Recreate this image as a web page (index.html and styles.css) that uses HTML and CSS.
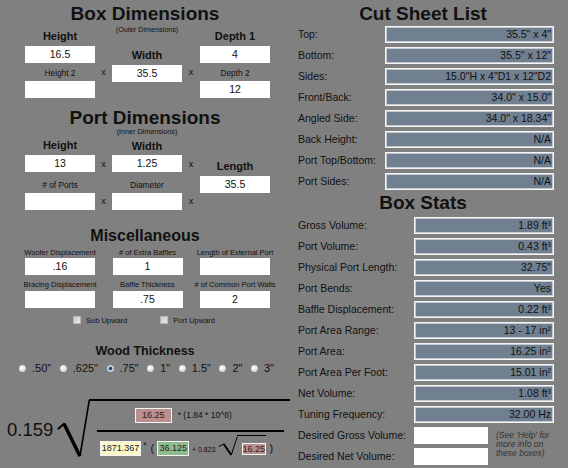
FILE: index.html
```html
<!DOCTYPE html>
<html>
<head>
<meta charset="utf-8">
<link rel="stylesheet" href="styles.css">
</head>
<body>
<div class="app">
  <div class="left">
    <section class="sec-box">
      <h1 class="title">Box Dimensions</h1>
      <div class="dims">
        <div class="col">
          <div class="lb bx-l1">Height</div>
          <div class="field bx-f1">16.5</div>
          <div class="ls bx-l2">Height 2</div>
          <div class="field bx-f2"></div>
        </div>
        <div class="sep bx-sep">x</div>
        <div class="col">
          <div class="sub bx-sub">(Outer Dimensions)</div>
          <div class="lb bx-wl">Width</div>
          <div class="field bx-wf">35.5</div>
        </div>
        <div class="sep bx-sep">x</div>
        <div class="col">
          <div class="lb bx-l1">Depth 1</div>
          <div class="field bx-f1">4</div>
          <div class="ls bx-l2">Depth 2</div>
          <div class="field bx-f2">12</div>
        </div>
      </div>
    </section>

    <section class="sec-port">
      <h1 class="title pt-title">Port Dimensions</h1>
      <div class="dims">
        <div class="col">
          <div class="lb pt-l1">Height</div>
          <div class="field pt-f1">13</div>
          <div class="ls pt-l2"># of Ports</div>
          <div class="field pt-f2"></div>
        </div>
        <div class="col sep pt-sep">
          <div>x</div>
          <div class="pt-sep2">x</div>
        </div>
        <div class="col">
          <div class="sub pt-sub">(Inner Dimensions)</div>
          <div class="lb pt-wl">Width</div>
          <div class="field pt-f1w">1.25</div>
          <div class="ls pt-l2">Diameter</div>
          <div class="field pt-f2"></div>
        </div>
        <div class="col sep pt-sep">
          <div>x</div>
          <div class="pt-sep2">x</div>
        </div>
        <div class="col">
          <div class="lb pt-ll">Length</div>
          <div class="field pt-lf">35.5</div>
        </div>
      </div>
    </section>

    <section class="sec-misc">
      <h2 class="title-m">Miscellaneous</h2>
      <div class="misc-row mr1">
        <div class="cell"><div class="ml">Woofer Displacement</div><div class="field mf">.16</div></div>
        <div class="cell"><div class="ml"># of Extra Baffles</div><div class="field mf">1</div></div>
        <div class="cell"><div class="ml">Length of External Port</div><div class="field mf"></div></div>
      </div>
      <div class="misc-row mr2">
        <div class="cell"><div class="ml">Bracing Displacement</div><div class="field mf"></div></div>
        <div class="cell"><div class="ml">Baffle Thickness</div><div class="field mf">.75</div></div>
        <div class="cell"><div class="ml"># of Common Port Walls</div><div class="field mf">2</div></div>
      </div>
      <div class="checks">
        <div class="chk"><span class="cbox"></span><span>Sub Upward</span></div>
        <div class="chk"><span class="cbox"></span><span>Port Upward</span></div>
      </div>
    </section>

    <section class="sec-wood">
      <h2 class="title-w">Wood Thickness</h2>
      <div class="radios">
        <div class="rad"><span class="rdot"></span><span>.50"</span></div>
        <div class="rad"><span class="rdot"></span><span>.625"</span></div>
        <div class="rad"><span class="rdot on"></span><span>.75"</span></div>
        <div class="rad"><span class="rdot"></span><span>1"</span></div>
        <div class="rad"><span class="rdot"></span><span>1.5"</span></div>
        <div class="rad"><span class="rdot"></span><span>2"</span></div>
        <div class="rad"><span class="rdot"></span><span>3"</span></div>
      </div>
    </section>

    <div class="formula">
      <div class="coef">0.159</div>
      <svg class="radical" width="32" height="59" viewBox="0 0 32 59">
        <line x1="1.3" y1="29.8" x2="7" y2="24.8" stroke="#000" stroke-width="1.8" stroke-linecap="round"/>
        <line x1="7" y1="24.8" x2="23" y2="57.2" stroke="#000" stroke-width="3.4"/>
        <line x1="23" y1="57.2" x2="32.3" y2="1" stroke="#000" stroke-width="1.6"/>
      </svg>
      <div class="radicand">
        <div class="num">
          <span class="chip pink wn">16.25</span>
          <span class="ntext">* (1.84 * 10^8)</span>
        </div>
        <div class="bar"></div>
        <div class="den">
          <span class="chip yellow wy">1871.367</span>
          <span class="op">*</span>
          <span class="paren">(</span>
          <span class="chip green wg">36.125</span>
          <span class="plus">+ 0.823</span>
          <span class="sqs">
            <svg class="rad-s" width="19" height="20" viewBox="0 0 19 20">
              <line x1="0.7" y1="10.7" x2="5.7" y2="8" stroke="#000" stroke-width="1" />
              <line x1="5.7" y1="8" x2="13.3" y2="19" stroke="#000" stroke-width="2"/>
              <line x1="13.3" y1="19" x2="19.2" y2="0.7" stroke="#000" stroke-width="1"/>
            </svg>
            <span class="over"><span class="chip pink wp">16.25</span></span>
          </span>
          <span class="paren pr">)</span>
        </div>
      </div>
    </div>
  </div>

  <div class="right">
    <h1 class="rtitle">Cut Sheet List</h1>
    <div class="list cut">
      <div class="row"><span class="k">Top:</span><span class="val">35.5" x 4"</span></div>
      <div class="row"><span class="k">Bottom:</span><span class="val">35.5" x 12"</span></div>
      <div class="row"><span class="k">Sides:</span><span class="val">15.0"H x 4"D1 x 12"D2</span></div>
      <div class="row"><span class="k">Front/Back:</span><span class="val">34.0" x 15.0"</span></div>
      <div class="row"><span class="k">Angled Side:</span><span class="val">34.0" x 18.34"</span></div>
      <div class="row"><span class="k">Back Height:</span><span class="val">N/A</span></div>
      <div class="row"><span class="k">Port Top/Bottom:</span><span class="val">N/A</span></div>
      <div class="row"><span class="k">Port Sides:</span><span class="val">N/A</span></div>
    </div>
    <h1 class="rtitle stitle">Box Stats</h1>
    <div class="list stats">
      <div class="row"><span class="k">Gross Volume:</span><span class="val">1.89 ft³</span></div>
      <div class="row"><span class="k">Port Volume:</span><span class="val">0.43 ft³</span></div>
      <div class="row"><span class="k">Physical Port Length:</span><span class="val">32.75"</span></div>
      <div class="row"><span class="k">Port Bends:</span><span class="val">Yes</span></div>
      <div class="row"><span class="k">Baffle Displacement:</span><span class="val">0.22 ft³</span></div>
      <div class="row"><span class="k">Port Area Range:</span><span class="val">13 - 17 in²</span></div>
      <div class="row"><span class="k">Port Area:</span><span class="val">16.25 in²</span></div>
      <div class="row"><span class="k">Port Area Per Foot:</span><span class="val">15.01 in²</span></div>
      <div class="row"><span class="k">Net Volume:</span><span class="val">1.08 ft³</span></div>
      <div class="row"><span class="k">Tuning Frequency:</span><span class="val">32.00 Hz</span></div>
    </div>
    <div class="desired">
      <div class="drows">
        <div class="row"><span class="k">Desired Gross Volume:</span><span class="wbox"></span></div>
        <div class="row"><span class="k">Desired Net Volume:</span><span class="wbox"></span></div>
      </div>
      <div class="help">(See 'Help' for<br>more info on<br>these boxes)</div>
    </div>
  </div>
</div>
</body>
</html>
```
FILE: styles.css
```css
html, body {
  margin: 0;
  padding: 0;
}
body {
  width: 568px;
  height: 468px;
  overflow: hidden;
  background: #808080;
  color: #111;
  font-family: "Liberation Sans", Arial, sans-serif;
}
.app {
  display: flex;
  height: 468px;
}
.left {
  width: 290px;
  flex: none;
  padding-top: 4px;
}
.title {
  margin: 0;
  font-size: 19px;
  line-height: 20px;
  font-weight: bold;
  text-align: center;
}
.dims {
  display: grid;
  grid-template-columns: 70px 17px 70px 18px 70px;
  margin-left: 25px;
}
.col {
  display: flex;
  flex-direction: column;
  align-items: stretch;
}
.lb {
  font-size: 11px;
  line-height: 12px;
  font-weight: bold;
  text-align: center;
}
.ls {
  font-size: 8.3px;
  line-height: 10px;
  text-align: center;
}
.sub {
  font-size: 7.2px;
  line-height: 8px;
  text-align: center;
  white-space: nowrap;
}
.sep {
  font-size: 9px;
  line-height: 10px;
  text-align: center;
}
.field {
  height: 17px;
  background: #fff;
  font-size: 10.5px;
  line-height: 17px;
  text-align: center;
  color: #111;
}

/* box dimensions */
.bx-l1 { margin-top: 6px; }
.bx-f1 { margin-top: 4px; }
.bx-l2 { margin-top: 5px; }
.bx-f2 { margin-top: 3px; }
.bx-sub { margin-top: 1.5px; }
.bx-wl { margin-top: 15px; }
.bx-wf { margin-top: 4.5px; }
.bx-sep { padding-top: 43px; }

/* port dimensions */
.sec-port { margin-top: 10.6px; }
.pt-title { line-height: 17px; }
.pt-l1 { margin-top: 13.4px; }
.pt-f1 { margin-top: 4px; }
.pt-l2 { margin-top: 8.4px; }
.pt-f2 { margin-top: 2.3px; }
.pt-sub { margin-top: 2.4px; }
.pt-wl { margin-top: 4.2px; }
.pt-f1w { margin-top: 2.8px; }
.pt-ll { margin-top: 34.6px; }
.pt-lf { margin-top: 3.8px; }
.pt-sep { padding-top: 33.8px; }
.pt-sep2 { margin-top: 26.5px; }

/* misc */
.title-m {
  margin: 17px 0 0;
  font-size: 16px;
  line-height: 18px;
  font-weight: bold;
  text-align: center;
}
.misc-row {
  display: grid;
  grid-template-columns: 70px 70px 70px;
  column-gap: 17.5px;
  margin-left: 25px;
}
.mr1 { margin-top: 3px; }
.mr2 { margin-top: 5px; }
.cell {
  display: flex;
  flex-direction: column;
  align-items: center;
}
.ml {
  font-size: 7.5px;
  line-height: 9px;
  white-space: nowrap;
  text-align: center;
}
.mf {
  width: 70px;
  margin-top: 1.8px;
}
.checks {
  display: flex;
  justify-content: center;
  gap: 33px;
  margin-top: 7.5px;
  font-size: 7.5px;
  line-height: 9px;
  padding-right: 2px;
}
.chk {
  display: flex;
  align-items: center;
  gap: 5px;
}
.cbox {
  width: 6px;
  height: 6px;
  background: linear-gradient(135deg, #c8c8c8, #ececec);
  border: 1px solid #b4b4b4;
}

/* wood thickness */
.title-w {
  margin: 19.5px 0 0;
  font-size: 12.5px;
  line-height: 14px;
  font-weight: bold;
  text-align: center;
}
.radios {
  display: flex;
  gap: 8.5px;
  margin-top: 4.2px;
  padding-left: 19px;
  font-size: 11px;
  line-height: 12px;
}
.rad {
  display: flex;
  align-items: center;
  gap: 6px;
}
.rdot {
  width: 7px;
  height: 7px;
  border-radius: 50%;
  background: radial-gradient(circle at 40% 40%, #ffffff 0, #e4e4e4 45%, #b8b8b8 100%);
}
.rdot.on {
  background: radial-gradient(circle at 50% 50%, #16416d 0, #2a5d8c 30%, #cfd6dc 45%, #b0b0b0 100%);
}

/* formula */
.formula {
  display: flex;
  margin-top: 24.6px;
  padding-left: 7px;
  height: 60px;
}
.coef {
  font-size: 18.5px;
  line-height: 20px;
  margin-top: 21.3px;
}
.radical {
  flex: none;
  margin-left: 3.7px;
  overflow: visible;
}
.radicand {
  flex: 1;
  border-top: 2px solid #000;
  padding-left: 8px;
  height: 57px;
}
.num {
  display: flex;
  align-items: center;
  height: 28.5px;
  padding-left: 37.7px;
}
.chip {
  box-sizing: border-box;
  height: 15px;
  border: 1px solid #f4f4f4;
  font-size: 9px;
  line-height: 13px;
  text-align: center;
  color: #222;
  flex: none;
}
.pink { background: #bc8f8f; }
.green { background: #8fbc8f; }
.yellow { background: #fbf7c6; }
.wn { width: 37.3px; }
.wy { width: 41px; }
.wg { width: 32px; }
.wp { width: 39px; }
.ntext {
  margin-left: 5.7px;
  font-size: 8.5px;
  line-height: 12px;
}
.bar {
  width: 187px;
  height: 2px;
  background: #000;
}
.den {
  display: flex;
  align-items: flex-end;
  margin-top: 4px;
  padding-left: 3px;
  height: 20px;
}
.op {
  margin-left: 2.3px;
  font-size: 8.5px;
  line-height: 15px;
  align-self: center;
}
.paren {
  margin-left: 4px;
  font-size: 11px;
  line-height: 15px;
}
.wg { margin-left: 3px; }
.plus {
  margin-left: 2.7px;
  font-size: 7px;
  line-height: 13px;
}
.sqs {
  display: flex;
  align-items: flex-end;
  margin-left: 2.7px;
}
.rad-s {
  flex: none;
  overflow: visible;
}
.over {
  display: block;
  border-top: 1.5px solid #000;
  padding: 2px 0 0 4.3px;
}
.pr { margin-left: 3.4px; }

/* right panel */
.right {
  flex: 1;
  padding: 4.4px 14px 0 8px;
}
.rtitle {
  margin: 0;
  font-size: 19px;
  line-height: 20px;
  font-weight: bold;
  text-align: center;
  padding-right: 6px;
}
.list {
  display: flex;
  flex-direction: column;
  gap: 4px;
}
.cut { margin-top: 1.6px; }
.stitle { margin-top: 3.4px; }
.stats { margin-top: 3.6px; }
.row {
  display: flex;
  align-items: center;
  height: 17px;
}
.k {
  flex: 1;
  font-size: 10.5px;
  line-height: 17px;
  white-space: nowrap;
}
.val {
  box-sizing: border-box;
  width: 169px;
  height: 17px;
  background: #708090;
  border: 1px solid #f6f6f6;
  box-shadow: inset 0 0 0 1px #c4cad0;
  font-size: 10.5px;
  line-height: 15px;
  text-align: right;
  padding-right: 2px;
  color: #111;
  white-space: nowrap;
}
.stats .val { width: 140px; }
.desired {
  display: flex;
  margin-top: 4px;
}
.drows {
  width: 190px;
  display: flex;
  flex-direction: column;
  gap: 4px;
}
.wbox {
  width: 74px;
  height: 17px;
  background: #fff;
}
.help {
  margin-left: 8px;
  margin-top: 3.8px;
  font-size: 8.5px;
  line-height: 9.3px;
  font-style: italic;
  color: #333;
  white-space: nowrap;
}
```
